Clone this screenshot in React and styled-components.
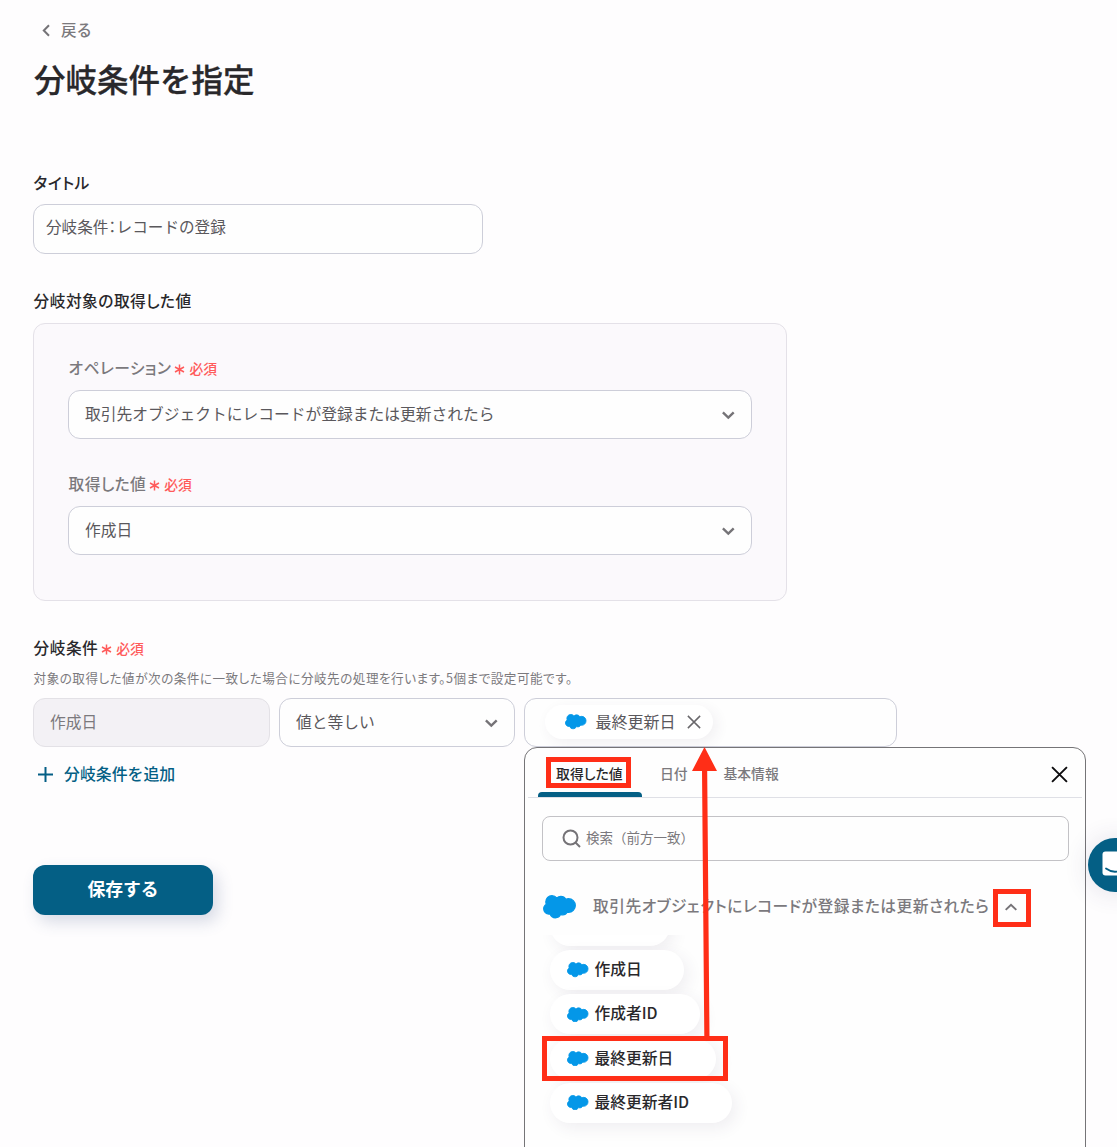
import React from "react";
import styled, { createGlobalStyle } from "styled-components";

const palette = {
  ink: "#29282b",
  text: "#5a585c",
  sub: "#7b797d",
  line: "#cdced9",
  teal: "#045f85",
  red: "#ff5b5b",
  mark: "#ff2e17",
  sky: "#0497e8",
};

const GlobalStyle = createGlobalStyle`
  * {
    box-sizing: border-box;
  }

  body {
    margin: 0;
    background: #fefdfe;
    font-family: "Noto Sans CJK JP", sans-serif;
    color: ${palette.text};
  }

  h1, h2, p {
    margin: 0;
  }

  svg {
    display: block;
    flex-shrink: 0;
  }

  button {
    font: inherit;
    border: 0;
    padding: 0;
    background: none;
  }
`;

const Page = styled.main`
  position: relative;
  width: 1117px;
  height: 1147px;
  padding: 17px 33px 0;
  overflow: hidden;
`;

const BackLink = styled.div`
  display: flex;
  align-items: center;
  gap: 11px;
  height: 24px;
  padding-left: 9px;
  font-size: 15.5px;
  font-weight: 500;
  color: ${palette.sub};

  svg {
    margin-top: 3px;
  }
`;

const PageTitle = styled.h1`
  height: 44px;
  margin-top: 15px;
  padding-left: 1px;
  font-size: 31.5px;
  line-height: 44px;
  font-weight: 500;
  -webkit-text-stroke: 0.3px ${palette.ink};
  color: ${palette.ink};
`;

const Label = styled.h2`
  display: flex;
  align-items: center;
  height: 24px;
  margin-top: ${(props) => props.$top || 0}px;
  padding-left: 0.6px;
  font-size: 15.75px;
  font-weight: 500;
  font-feature-settings: "palt";
  letter-spacing: 0.42px;
  color: ${(props) => (props.$muted ? palette.sub : palette.ink)};
`;

const RequiredMark = styled.span`
  display: flex;
  align-items: center;
  gap: 4px;
  margin: 2px 0 0 3px;
  font-size: 13.8px;
  letter-spacing: 0;
  color: ${palette.red};

  svg {
    margin-top: 3px;
  }
`;

const Box = styled.div`
  display: flex;
  align-items: center;
  justify-content: space-between;
  width: ${(props) => props.$width}px;
  height: ${(props) => props.$height || 49}px;
  margin-top: ${(props) => props.$top || 0}px;
  padding: ${(props) => props.$padding || "0 16px"};
  border: 1px solid ${(props) => (props.$disabled ? "#e3e1e6" : palette.line)};
  border-radius: 12px;
  background: ${(props) => (props.$disabled ? "#f3f1f5" : "#fefefe")};
  font-size: ${(props) => props.$size || 15.75}px;
  color: ${(props) => (props.$disabled ? palette.sub : palette.text)};
`;

const Value = styled.span`
  padding-bottom: 3px;
`;

const Colon = styled.span`
  font-feature-settings: "palt";
  letter-spacing: 0.4px;
`;

const Panel = styled.section`
  width: 754px;
  height: 278px;
  margin-top: 11px;
  padding: 31px 34px 0;
  border: 1px solid #e4e1e8;
  border-radius: 12px;
  background: #fbf9fc;
`;

const Field = styled.div`
  display: flex;
  flex-direction: column;
  gap: 11px;
  margin-bottom: 32px;
`;

const HelpText = styled.p`
  height: 20px;
  margin: 9px 0 10px;
  padding-left: 0.6px;
  font-size: 12.6px;
  line-height: 20px;
  font-feature-settings: "palt";
  letter-spacing: 0.48px;
  color: ${palette.sub};
`;

const Conditions = styled.div`
  display: flex;
  gap: 9px;
`;

const AddButton = styled.button`
  display: flex;
  align-items: center;
  gap: 11px;
  height: 24px;
  margin: 14px 0 0 5px;
  font-size: 15.9px;
  font-weight: 500;
  color: ${palette.teal};

  svg {
    margin-top: 2px;
  }
`;

const SaveButton = styled.button`
  display: block;
  width: 180px;
  height: 50px;
  margin-top: 80px;
  padding-bottom: 4px;
  border-radius: 12px;
  background: ${palette.teal};
  box-shadow: 5px 7px 16px rgba(60, 80, 130, 0.2);
  font-size: 17.8px;
  font-weight: 700;
  color: #fff;
`;

const Tag = styled.div`
  display: flex;
  align-items: center;
  gap: 9px;
  height: 34px;
  padding: 0 12px 0 20px;
  border-radius: 17px;
  background: #fff;
  box-shadow: 4px 4px 14px rgba(70, 50, 90, 0.07);
  font-size: 16px;
  color: ${palette.text};

  svg:last-child {
    margin-left: 2px;
  }
`;

const Popup = styled.section`
  position: absolute;
  left: 524px;
  top: 747px;
  width: 562px;
  height: 420px;
  padding: 0 3px;
  border: 1px solid #757477;
  border-radius: 13px;
  background: #fefefe;
`;

const TabBar = styled.div`
  display: flex;
  height: 50px;
  padding: 0 14px 0 10px;
  border-bottom: 1px solid #dfe0e6;
`;

const Tab = styled.div`
  display: flex;
  flex-direction: column;
  justify-content: space-between;
  width: ${(props) => props.$width}px;
  height: 49px;
  font-size: 13.8px;
  font-weight: 500;
  color: ${(props) => (props.$active ? palette.ink : palette.sub)};
`;

const TabText = styled.span`
  padding: 15px 0 0 18px;
  line-height: 20px;
  white-space: nowrap;
  ${(props) => props.$active && 'font-feature-settings: "palt"; letter-spacing: 0.1px;'}
`;

const TabLine = styled.span`
  height: 5px;
  border-radius: 4px 4px 0 0;
  background: ${palette.teal};
`;

const CloseButton = styled.button`
  margin: 4px 0 0 auto;
`;

const SearchBox = styled.div`
  display: flex;
  align-items: center;
  gap: 5px;
  height: 45px;
  margin: 18px 13px 0 14px;
  padding-left: 19px;
  border: 1px solid #c3c2c6;
  border-radius: 8px;
  font-size: 13.5px;
  color: ${palette.sub};
`;

const Group = styled.div`
  display: flex;
  align-items: center;
  height: 40px;
  margin: 26px 0 0 15px;
  font-size: 15.75px;
  font-weight: 500;
  font-feature-settings: "palt";
  letter-spacing: 0.46px;
  color: ${palette.sub};
`;

const GroupName = styled.span`
  width: 411px;
  margin-left: 17px;
  padding-bottom: 3px;
`;

const ChipList = styled.div`
  display: flex;
  flex-direction: column;
  align-items: flex-start;
  gap: 4.3px;
  height: 212px;
  margin-top: 8px;
  margin-left: 14px;
  padding-left: 8px;
  overflow: hidden;
`;

const Chip = styled.div`
  display: flex;
  flex-shrink: 0;
  align-items: center;
  gap: 6px;
  width: ${(props) => props.$width}px;
  height: 40px;
  padding-left: 17px;
  border-radius: 20px;
  background: #fff;
  box-shadow: 4px 5px 16px rgba(70, 50, 90, 0.08);
  font-size: 15.75px;
  font-weight: 500;
  color: ${palette.ink};

  &:first-child {
    margin-top: -29.4px;
  }
`;

const Highlight = styled.div`
  position: absolute;
  left: ${(props) => props.$x}px;
  top: ${(props) => props.$y}px;
  width: ${(props) => props.$w}px;
  height: ${(props) => props.$h}px;
  border: 5px solid ${palette.mark};
`;

const Arrow = styled.svg`
  position: absolute;
  left: 690px;
  top: 746px;
`;

const ChatBubble = styled.div`
  position: absolute;
  left: 1088px;
  top: 838px;
  display: flex;
  align-items: center;
  width: 54px;
  height: 54px;
  padding: 0 0 3px 14px;
  border-radius: 50%;
  background: ${palette.teal};
  box-shadow: 0 1px 26px rgba(60, 50, 100, 0.14);
`;

const chips = [
  { name: "", width: 120 },
  { name: "作成日", width: 134 },
  { name: "作成者ID", width: 150 },
  { name: "最終更新日", width: 166 },
  { name: "最終更新者ID", width: 182 },
];

function Cloud({ width }) {
  return (
    <svg
      width={width}
      height={width * 0.71}
      viewBox="-0.5 3.1 25 17.8"
      fill={palette.sky}
      stroke={palette.sky}
      strokeLinejoin="round"
    >
      <path d="M10.006 5.415a4.195 4.195 0 0 1 3.045-1.306c1.56 0 2.954.9 3.69 2.205.63-.3 1.35-.45 2.1-.45 2.85 0 5.159 2.34 5.159 5.22s-2.31 5.22-5.176 5.22c-.345 0-.69-.044-1.02-.104a3.75 3.75 0 0 1-3.3 1.95c-.6 0-1.155-.15-1.65-.375A4.314 4.314 0 0 1 8.88 20.4a4.302 4.302 0 0 1-4.05-2.82c-.27.062-.54.076-.825.076C1.8 17.656 0 15.856 0 13.606c0-1.5.811-2.805 2.01-3.51-.255-.57-.39-1.2-.39-1.846 0-2.58 2.1-4.65 4.65-4.65 1.53 0 2.85.705 3.736 1.815z" />
    </svg>
  );
}

function Chevron({ up }) {
  return (
    <svg width="14" height="10" viewBox="0 0 14 10" fill="none" stroke="#757377" strokeWidth={up ? 2 : 2.4}>
      <path d={up ? "M1.7 7.9 7 2.8l5.3 5.1" : "M1.9 2.4 7.3 7.6l5.4-5.2"} />
    </svg>
  );
}

function Cross({ size, color, weight }) {
  return (
    <svg width={size} height={size} viewBox="0 0 16 16" stroke={color} strokeWidth={weight}>
      <path d="M1 1l14 14M15 1L1 15" />
    </svg>
  );
}

function Required() {
  return (
    <RequiredMark>
      <svg width="11" height="11" viewBox="0 0 11 11" stroke={palette.red} strokeWidth="1.5">
        <path d="M5.5.5v10M1 3l9 5M10 3L1 8" />
      </svg>
      必須
    </RequiredMark>
  );
}

function Select({ width, value }) {
  return (
    <Box $width={width}>
      <Value>{value}</Value>
      <Chevron />
    </Box>
  );
}

function ValuePicker() {
  return (
    <Popup>
      <TabBar>
        <Tab $width={104} $active>
          <TabText $active>取得した値</TabText>
          <TabLine />
        </Tab>
        <Tab $width={63.5}>
          <TabText>日付</TabText>
        </Tab>
        <Tab $width={100}>
          <TabText>基本情報</TabText>
        </Tab>
        <CloseButton>
          <Cross size={17} color="#0d0c0e" weight={1.8} />
        </CloseButton>
      </TabBar>
      <SearchBox>
        <svg width="19" height="19" viewBox="0 0 19 19" fill="none" stroke="#757377" strokeWidth="2">
          <circle cx="8.5" cy="8.5" r="7" />
          <path d="M13.5 13.5l4.5 4.5" />
        </svg>
        <Value>検索（前方一致）</Value>
      </SearchBox>
      <Group>
        <Cloud width={33} />
        <GroupName>取引先オブジェクトにレコードが登録または更新されたら</GroupName>
        <Chevron up />
      </Group>
      <ChipList>
        {chips.map((chip) => (
          <Chip key={chip.name} $width={chip.width}>
            {chip.name && <Cloud width={21.5} />}
            <Value>{chip.name}</Value>
          </Chip>
        ))}
      </ChipList>
    </Popup>
  );
}

function App() {
  return (
    <Page>
      <GlobalStyle />
      <BackLink>
        <svg width="8" height="13" viewBox="0 0 8 13" fill="none" stroke="#757377" strokeWidth="2">
          <path d="M7 1.2L1.8 6.5 7 11.8" />
        </svg>
        戻る
      </BackLink>
      <PageTitle>分岐条件を指定</PageTitle>

      <Label $top={70}>タイトル</Label>
      <Box $width={450} $height={50} $top={10} $size={15.6} $padding="0 12px 3px">
        <Value>
          分岐条件<Colon>：</Colon>レコードの登録
        </Value>
      </Box>

      <Label $top={34}>分岐対象の取得した値</Label>
      <Panel>
        <Field>
          <Label $muted>
            オペレーション
            <Required />
          </Label>
          <Select width={684} value="取引先オブジェクトにレコードが登録または更新されたら" />
        </Field>
        <Field>
          <Label $muted>
            取得した値
            <Required />
          </Label>
          <Select width={684} value="作成日" />
        </Field>
      </Panel>

      <Label $top={34}>
        分岐条件
        <Required />
      </Label>
      <HelpText>対象の取得した値が次の条件に一致した場合に分岐先の処理を行います。5個まで設定可能です。</HelpText>
      <Conditions>
        <Box $width={237} $disabled>
          <Value>作成日</Value>
        </Box>
        <Select width={236} value="値と等しい" />
        <Box $width={373} $padding="0 20px 1px">
          <Tag>
            <Cloud width={21.5} />
            <Value>最終更新日</Value>
            <Cross size={14} color="#69676b" weight={1.7} />
          </Tag>
        </Box>
      </Conditions>
      <AddButton>
        <svg width="15" height="15" viewBox="0 0 15 15" stroke={palette.teal} strokeWidth="2">
          <path d="M7.5 0v15M0 7.5h15" />
        </svg>
        分岐条件を追加
      </AddButton>
      <SaveButton>保存する</SaveButton>

      <ValuePicker />
      <ChatBubble>
        <svg width="26" height="26" viewBox="0 0 26 26" fill="none">
          <rect x="0.5" y="0.5" width="25" height="24" rx="3" fill="#fff" />
          <path d="M4 17.5q9 6.5 18 0" stroke={palette.teal} strokeWidth="1.8" strokeLinecap="round" />
        </svg>
      </ChatBubble>

      <Highlight $x={546} $y={757} $w={85} $h={31} />
      <Highlight $x={993} $y={889} $w={38} $h={38} />
      <Highlight $x={542} $y={1036} $w={186} $h={45} />
      <Arrow width="30" height="294" viewBox="0 0 30 294" fill={palette.mark}>
        <path d="M14.5 1L27 25h-9.8l2.3 266h-5.2L12 25H2z" />
      </Arrow>
    </Page>
  );
}

export default App;
